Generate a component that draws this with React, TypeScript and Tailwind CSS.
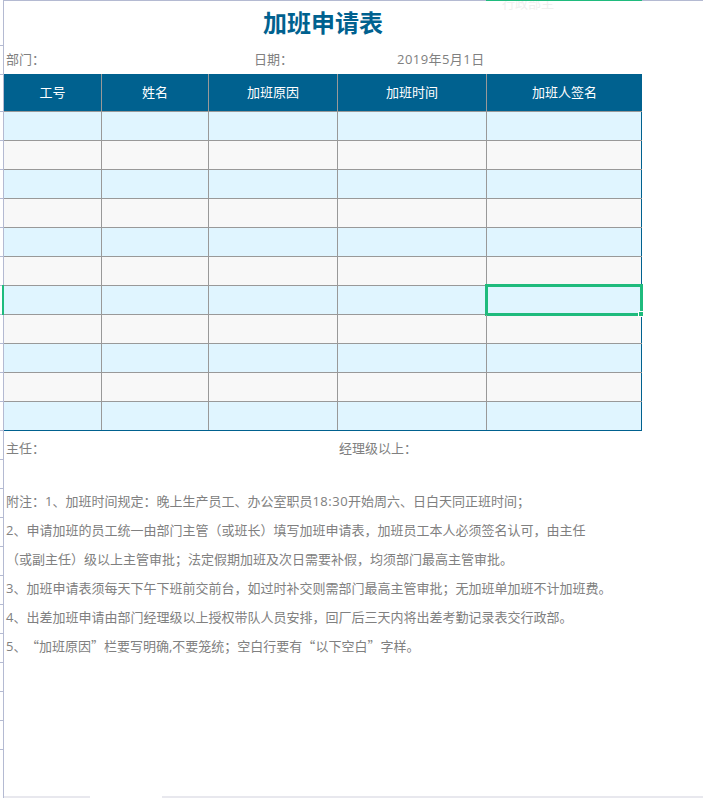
const cols = ["w-[98px]", "w-[107px]", "w-[129px]", "w-[149px]", "w-[155px]"];
const heads = ["工号", "姓名", "加班原因", "加班时间", "加班人签名"];
const rows = [0, 1, 2, 3, 4, 5, 6, 7, 8, 9, 10];
const ticks = [45, 29, 37, 29, 29, 29, 29, 29, 29, 29, 29, 29, 29, 29, 29, 29, 29, 29, 29, 29, 29, 29, 29, 29, 29];

const cjk = "font-['Noto_Sans_CJK_SC',sans-serif]";

export default function App() {
  return (
    <div className="flex h-[798px] w-[703px] overflow-hidden bg-white font-['Open_Sans','Noto_Sans_CJK_SC',sans-serif] text-[13px] text-[#808080]">
      <div className="flex h-full w-[4px] shrink-0 flex-col overflow-hidden border-r border-[#b4bad2] pt-px">
        {ticks.map((h, i) => (
          <div key={i} className="shrink-0 border-b border-[#b4bad2]" style={{ height: h }} />
        ))}
      </div>

      <div className="flex w-[699px] flex-col">
        <div className="flex h-px shrink-0">
          <div className="w-[482px] bg-[#b4bad2]" />
          <div className="w-[156px] bg-[#1fbb7d]" />
          <div className="flex-1 bg-[#b4bad2]" />
        </div>

        <div className="relative flex h-[45px] w-[638px] items-center justify-center pb-[1px] text-[24px] font-bold text-[#00618f]">
          加班申请表
          <div className="absolute top-0 left-[498px] flex h-[9px] items-end overflow-hidden text-[13px] leading-[13px] font-normal text-[#f0f0f0]">
            行政部主
          </div>
        </div>

        <div className="flex h-[28px] items-center pl-[2px]">
          <span className="w-[248px]">部门：</span>
          <span className="w-[143px]">日期：</span>
          <span className="tracking-[0.45px]">2019年5月1日</span>
        </div>

        <div className="flex h-[38px] w-[638px] bg-[#00618f] text-white">
          {heads.map((h, i) => (
            <div
              key={h}
              className={`${cols[i]} flex items-center justify-center border-b border-[#999999] ${i < 4 ? "border-r" : ""}`}
            >
              {h}
            </div>
          ))}
        </div>

        <div className="w-[638px] border-r border-b border-[#00618f]">
          {rows.map((r) => (
            <div
              key={r}
              className={`flex ${r === 10 ? "h-[28px]" : "h-[29px]"} ${r % 2 === 0 ? "bg-[#e0f5ff]" : "bg-[#f8f8f8]"}`}
            >
              {cols.map((c, i) => (
                <div
                  key={i}
                  className={`relative ${c} ${r === 10 ? "" : "border-b"} ${i < 4 ? "border-r" : ""} border-[#999999] ${i === 4 ? "-mr-px" : ""}`}
                >
                  {r === 6 && i === 4 && (
                    <div className="absolute -top-[2px] -left-[2px] right-[-1px] bottom-[-2px] border-[3px] border-[#1fbb7d]">
                      <div className="absolute -right-[4px] -bottom-[4px] size-[6px] border border-white bg-[#1fbb7d]" />
                    </div>
                  )}
                  {r === 6 && i === 0 && (
                    <div className="absolute -left-[2px] -top-px -bottom-px w-[2px] bg-[#1fbb7d]" />
                  )}
                </div>
              ))}
            </div>
          ))}
        </div>

        <div className="flex h-[36px] items-center pl-[2px]">
          <span className="w-[333px]">主任：</span>
          <span>经理级以上：</span>
        </div>

        <div className="flex flex-col pt-[20px] pl-[2px] whitespace-nowrap">
          <div className="flex h-[29px] items-center">
            <span>
              附注：1、加班时间规定：晚上生产员工、办公室职员<span className="tracking-[0.5px]">18:30</span>开始周六、日白天同正班时间；
            </span>
          </div>
          <div className="flex h-[29px] items-center">
            2、申请加班的员工统一由部门主管（或班长）填写加班申请表，加班员工本人必须签名认可，由主任
          </div>
          <div className="flex h-[29px] items-center">
            （或副主任）级以上主管审批；法定假期加班及次日需要补假，均须部门最高主管审批。
          </div>
          <div className="flex h-[29px] items-center">
            3、加班申请表须每天下午下班前交前台，如过时补交则需部门最高主管审批；无加班单加班不计加班费。
          </div>
          <div className="flex h-[29px] items-center">
            4、出差加班申请由部门经理级以上授权带队人员安排，回厂后三天内将出差考勤记录表交行政部。
          </div>
          <div className="flex h-[29px] items-center">
            <span>
              5、<span className="pl-[6px]" /><span className={cjk}>“</span>加班原因<span className={cjk}>”</span>栏要写明确,不要笼统；空白行要有<span className={cjk}>“</span>以下空白<span className={cjk}>”</span>字样。
            </span>
          </div>
        </div>

        <div className="mt-auto flex h-[2px] shrink-0">
          <div className="w-[86px] bg-[#e8e8ee]" />
          <div className="w-[72px]" />
          <div className="flex-1 bg-[#e8e8ee]" />
        </div>
      </div>
    </div>
  );
}
